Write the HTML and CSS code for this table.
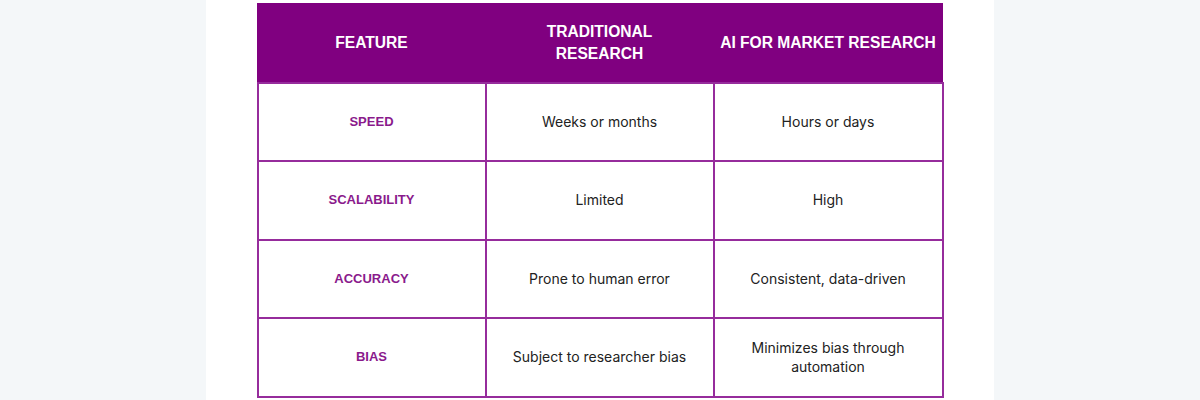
FILE: index.html
```html
<!DOCTYPE html>
<html>
<head>
<meta charset="utf-8">
<link rel="stylesheet" href="styles.css">
</head>
<body>
<div class="page">
  <table class="compare">
    <colgroup>
      <col class="c1"><col class="c2"><col class="c3">
    </colgroup>
    <thead>
      <tr>
        <th>FEATURE</th>
        <th>TRADITIONAL<br>RESEARCH</th>
        <th>AI FOR MARKET RESEARCH</th>
      </tr>
    </thead>
    <tbody>
      <tr><td class="feat">SPEED</td><td>Weeks or months</td><td>Hours or days</td></tr>
      <tr><td class="feat">SCALABILITY</td><td>Limited</td><td>High</td></tr>
      <tr><td class="feat">ACCURACY</td><td>Prone to human error</td><td>Consistent, data-driven</td></tr>
      <tr><td class="feat">BIAS</td><td>Subject to researcher bias</td><td>Minimizes bias through<br>automation</td></tr>
    </tbody>
  </table>
</div>
</body>
</html>
```
FILE: styles.css
```css
html, body {
  margin: 0;
  padding: 0;
  background: #f4f7f9;
  height: 400px;
  overflow: hidden;
}
.page {
  width: 788px;
  height: 400px;
  margin: 0 auto;
  background: #ffffff;
  padding-top: 3px;
  box-sizing: border-box;
}
.compare {
  margin: 0 auto;
  width: 685px;
  border-collapse: collapse;
  table-layout: fixed;
  font-family: "Inter", "Liberation Sans", sans-serif;
}
.c1 { width: 228px; }
.c2 { width: 228px; }
.c3 { width: 229px; }
.compare th {
  background: #800080;
  color: #ffffff;
  font-family: "Liberation Sans", Arial, sans-serif;
  font-weight: bold;
  font-size: 15.6px;
  line-height: 22px;
  height: 79px;
  padding: 0 3px;
  text-align: center;
  border: 1.5px solid #800080;
  box-sizing: border-box;
}
.compare td {
  height: 78.5px;
  padding: 0 6px 1px;
  text-align: center;
  vertical-align: middle;
  font-size: 14px;
  line-height: 19px;
  color: #222222;
  border: 2px solid #962c9c;
  box-sizing: border-box;
}
.compare td.feat {
  font-family: "Liberation Sans", Arial, sans-serif;
  font-weight: bold;
  font-size: 13px;
  color: #8a1a8c;
}
```
